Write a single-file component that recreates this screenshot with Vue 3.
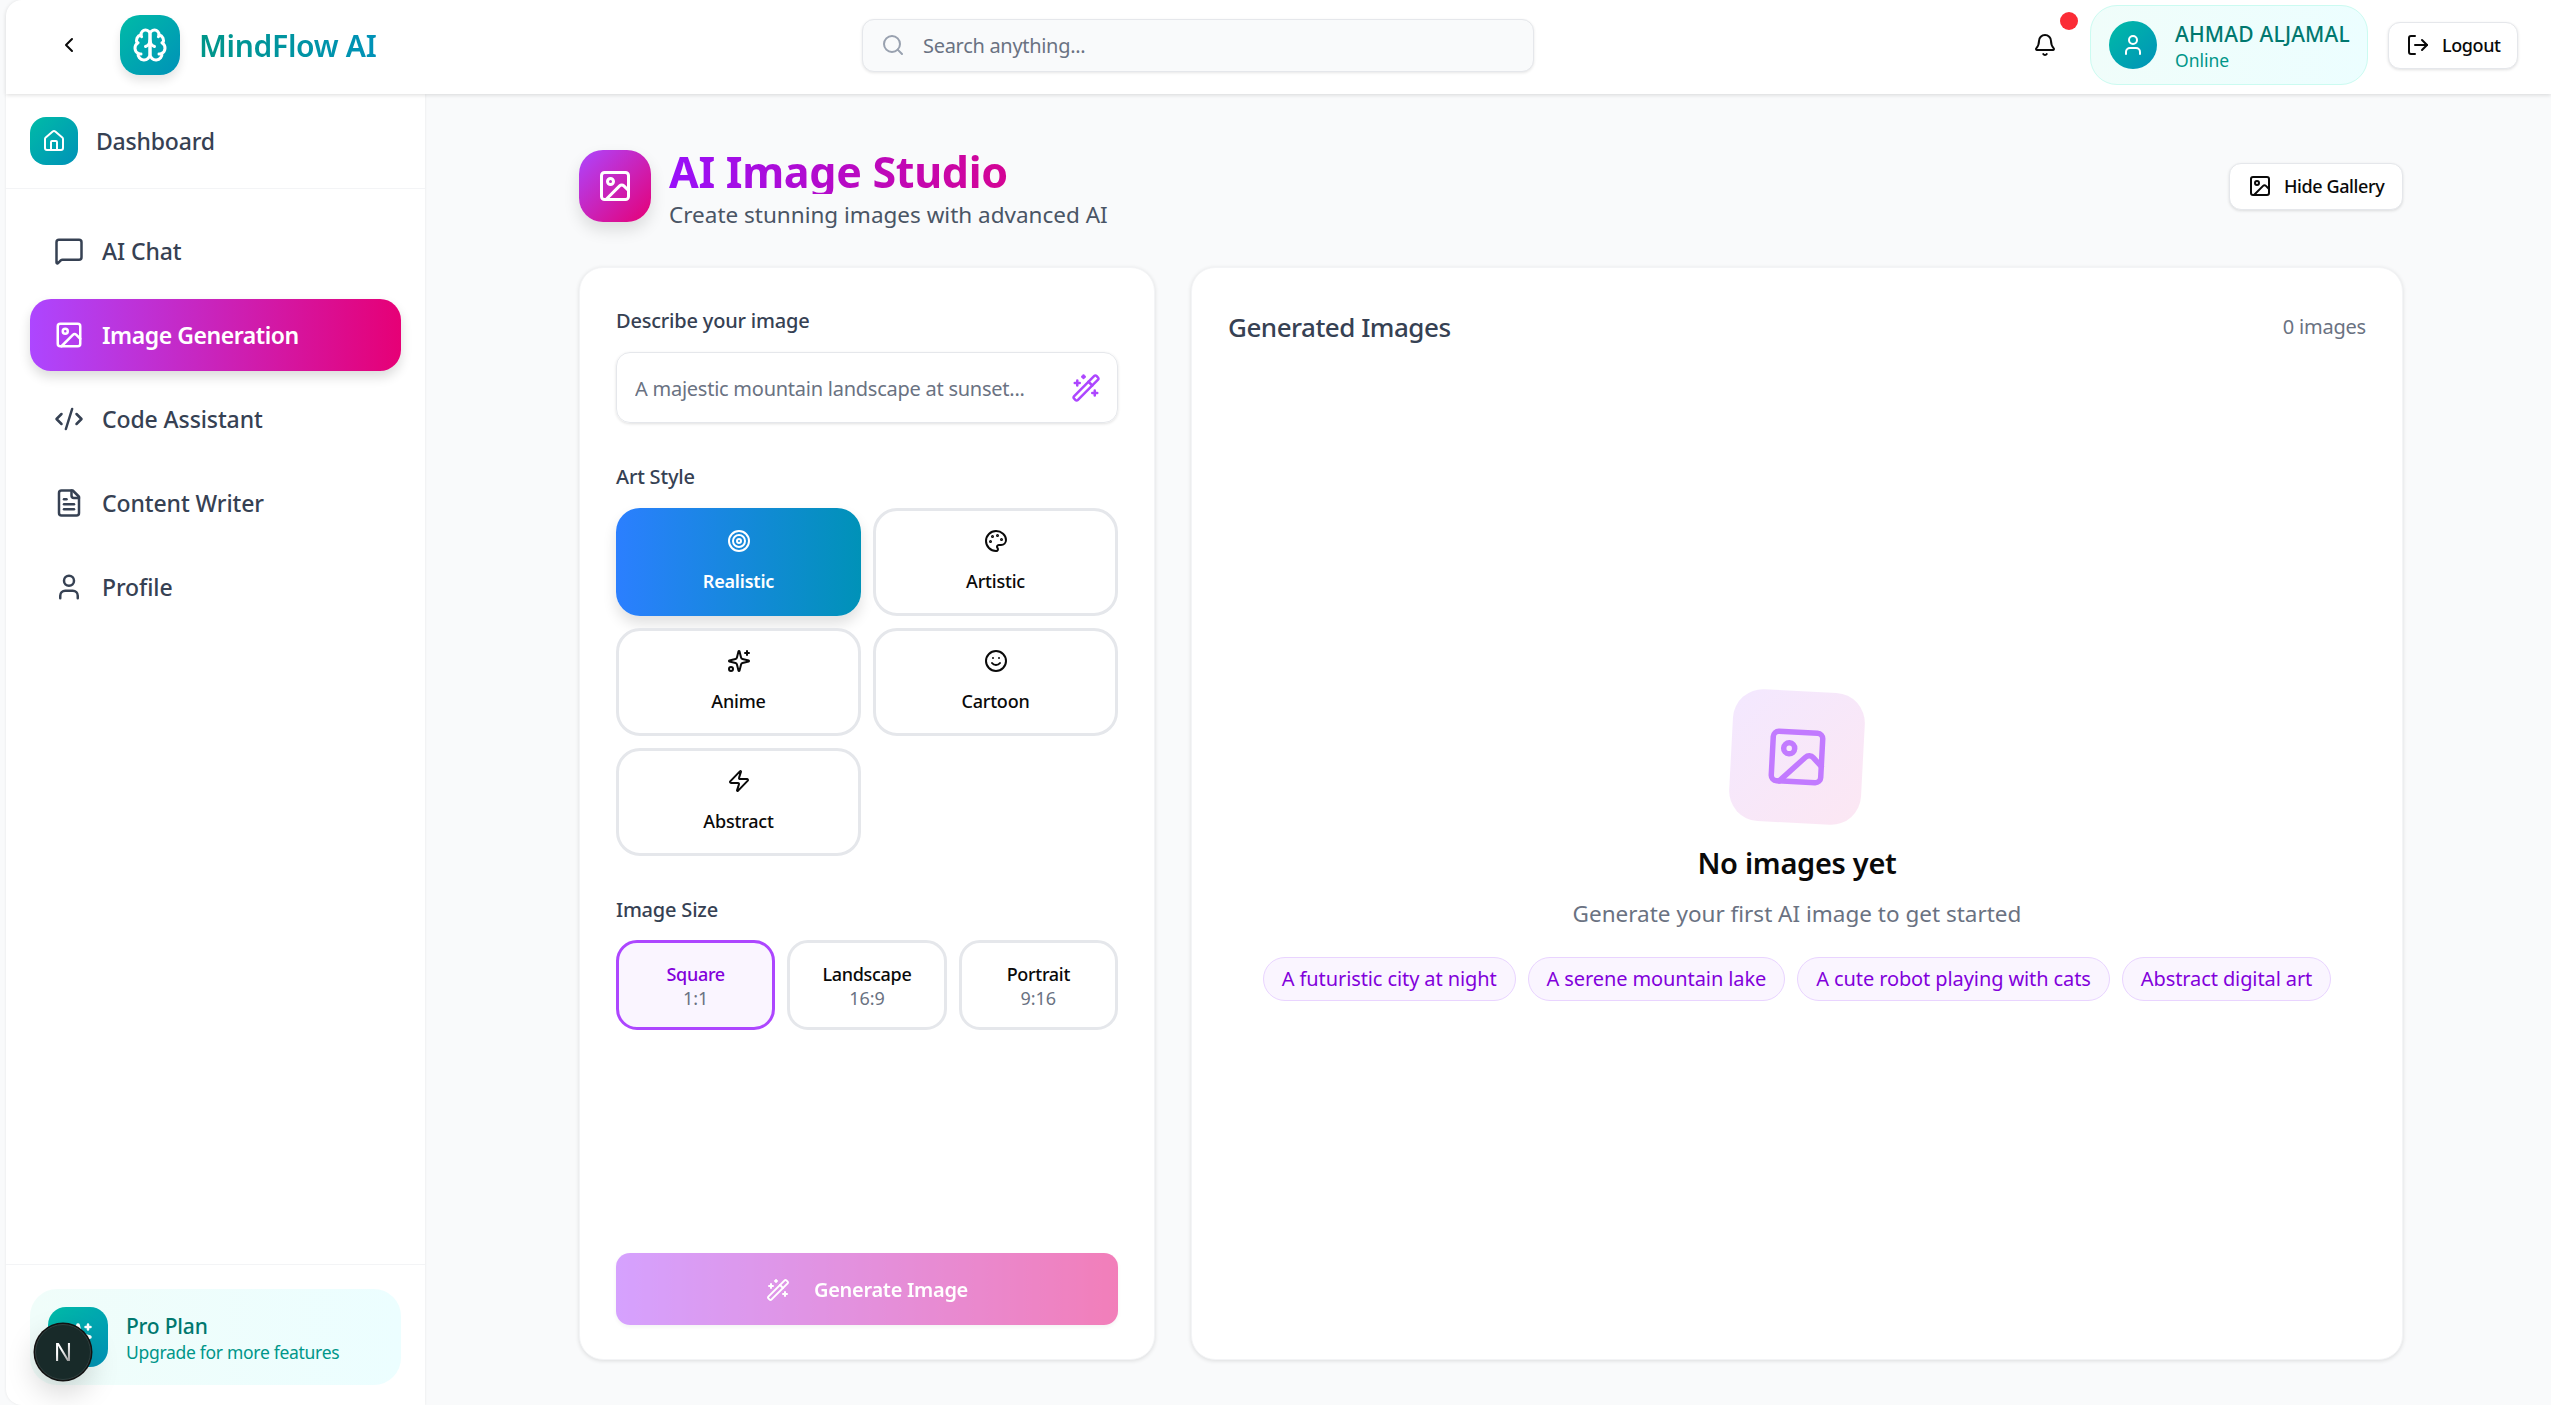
<script setup>
import { ref } from 'vue'

const icons = {
  back: '<path d="m15 18-6-6 6-6"/>',
  brain: '<path d="M12 5a3 3 0 1 0-5.997.125 4 4 0 0 0-2.526 5.77 4 4 0 0 0 .556 6.588A4 4 0 1 0 12 18Z"/><path d="M12 5a3 3 0 1 1 5.997.125 4 4 0 0 1 2.526 5.77 4 4 0 0 1-.556 6.588A4 4 0 1 1 12 18Z"/><path d="M15 13a4.5 4.5 0 0 1-3-4 4.5 4.5 0 0 1-3 4"/><path d="M17.599 6.5a3 3 0 0 0 .399-1.375"/><path d="M6.003 5.125A3 3 0 0 0 6.401 6.5"/><path d="M3.477 10.896a4 4 0 0 1 .585-.396"/><path d="M19.938 10.5a4 4 0 0 1 .585.396"/><path d="M6 18a4 4 0 0 1-1.967-.516"/><path d="M19.967 17.484A4 4 0 0 1 18 18"/>',
  search: '<path d="m21 21-4.34-4.34"/><circle cx="11" cy="11" r="8"/>',
  bell: '<path d="M10.268 21a2 2 0 0 0 3.464 0"/><path d="M3.262 15.326A1 1 0 0 0 4 17h16a1 1 0 0 0 .74-1.673C19.41 13.956 18 12.499 18 8A6 6 0 0 0 6 8c0 4.499-1.411 5.956-2.738 7.326"/>',
  user: '<path d="M19 21v-2a4 4 0 0 0-4-4H9a4 4 0 0 0-4 4v2"/><circle cx="12" cy="7" r="4"/>',
  logout: '<path d="m16 17 5-5-5-5"/><path d="M21 12H9"/><path d="M9 21H5a2 2 0 0 1-2-2V5a2 2 0 0 1 2-2h4"/>',
  home: '<path d="M15 21v-8a1 1 0 0 0-1-1h-4a1 1 0 0 0-1 1v8"/><path d="M3 10a2 2 0 0 1 .709-1.528l7-5.999a2 2 0 0 1 2.582 0l7 5.999A2 2 0 0 1 21 10v9a2 2 0 0 1-2 2H5a2 2 0 0 1-2-2z"/>',
  chat: '<path d="M22 17a2 2 0 0 1-2 2H6.828a2 2 0 0 0-1.414.586l-2.202 2.202A.71.71 0 0 1 2 21.286V5a2 2 0 0 1 2-2h16a2 2 0 0 1 2 2z"/>',
  image: '<rect width="18" height="18" x="3" y="3" rx="2" ry="2"/><circle cx="9" cy="9" r="2"/><path d="m21 15-3.086-3.086a2 2 0 0 0-2.828 0L6 21"/>',
  code: '<path d="m18 16 4-4-4-4"/><path d="m6 8-4 4 4 4"/><path d="m14.5 4-5 16"/>',
  file: '<path d="M15 2H6a2 2 0 0 0-2 2v16a2 2 0 0 0 2 2h12a2 2 0 0 0 2-2V7Z"/><path d="M14 2v4a2 2 0 0 0 2 2h4"/><path d="M10 9H8"/><path d="M16 13H8"/><path d="M16 17H8"/>',
  wand: '<path d="m21.64 3.64-1.28-1.28a1.21 1.21 0 0 0-1.72 0L2.36 18.64a1.21 1.21 0 0 0 0 1.72l1.28 1.28a1.2 1.2 0 0 0 1.72 0L21.64 5.36a1.2 1.2 0 0 0 0-1.72"/><path d="m14 7 3 3"/><path d="M5 6v4"/><path d="M19 14v4"/><path d="M10 2v2"/><path d="M7 8H3"/><path d="M21 16h-4"/><path d="M11 3H9"/>',
  target: '<circle cx="12" cy="12" r="10"/><circle cx="12" cy="12" r="6"/><circle cx="12" cy="12" r="2"/>',
  palette: '<path d="M12 22a1 1 0 0 1 0-20 10 9 0 0 1 10 9 5 5 0 0 1-5 5h-2.25a1.75 1.75 0 0 0-1.4 2.8l.3.4a1.75 1.75 0 0 1-1.4 2.8z"/><circle cx="13.5" cy="6.5" r=".5" fill="currentColor"/><circle cx="17.5" cy="10.5" r=".5" fill="currentColor"/><circle cx="6.5" cy="12.5" r=".5" fill="currentColor"/><circle cx="8.5" cy="7.5" r=".5" fill="currentColor"/>',
  sparkles: '<path d="M9.937 15.5A2 2 0 0 0 8.5 14.063l-6.135-1.582a.5.5 0 0 1 0-.962L8.5 9.936A2 2 0 0 0 9.937 8.5l1.582-6.135a.5.5 0 0 1 .963 0L14.063 8.5A2 2 0 0 0 15.5 9.937l6.135 1.581a.5.5 0 0 1 0 .964L15.5 14.063a2 2 0 0 0-1.437 1.437l-1.582 6.135a.5.5 0 0 1-.963 0z"/><path d="M20 2v4"/><path d="M22 4h-4"/><circle cx="4" cy="20" r="2"/>',
  smile: '<circle cx="12" cy="12" r="10"/><path d="M8 14s1.5 2 4 2 4-2 4-2"/><line x1="9" x2="9.01" y1="9" y2="9"/><line x1="15" x2="15.01" y1="9" y2="9"/>',
  zap: '<path d="M4 14a1 1 0 0 1-.78-1.63l9.9-10.2a.5.5 0 0 1 .86.46l-1.92 6.02A1 1 0 0 0 13 10h7a1 1 0 0 1 .78 1.63l-9.9 10.2a.5.5 0 0 1-.86-.46l1.92-6.02A1 1 0 0 0 11 14z"/>'
}

const navItems = [
  { label: 'AI Chat', icon: 'chat' },
  { label: 'Image Generation', icon: 'image', active: true },
  { label: 'Code Assistant', icon: 'code' },
  { label: 'Content Writer', icon: 'file' },
  { label: 'Profile', icon: 'user' }
]

const styles = [
  { label: 'Realistic', icon: 'target' },
  { label: 'Artistic', icon: 'palette' },
  { label: 'Anime', icon: 'sparkles' },
  { label: 'Cartoon', icon: 'smile' },
  { label: 'Abstract', icon: 'zap' }
]

const sizes = [
  { label: 'Square', ratio: '1:1' },
  { label: 'Landscape', ratio: '16:9' },
  { label: 'Portrait', ratio: '9:16' }
]

const suggestions = [
  'A futuristic city at night',
  'A serene mountain lake',
  'A cute robot playing with cats',
  'Abstract digital art'
]

const prompt = ref('')
const selectedStyle = ref('Realistic')
const selectedSize = ref('Square')
</script>

<template>
  <div class="app">
    <header class="topbar">
      <div class="brand">
        <button class="back-btn">
          <svg class="icon i24" viewBox="0 0 24 24" v-html="icons.back"></svg>
        </button>
        <div class="logo">
          <svg class="icon i36" viewBox="0 0 24 24" v-html="icons.brain"></svg>
        </div>
        <span class="brand-name">MindFlow AI</span>
      </div>

      <div class="search">
        <svg class="icon i24 search-icon" viewBox="0 0 24 24" v-html="icons.search"></svg>
        <input class="search-input" type="text" placeholder="Search anything..." />
      </div>

      <div class="top-actions">
        <button class="bell">
          <svg class="icon i24" viewBox="0 0 24 24" v-html="icons.bell"></svg>
          <span class="bell-dot"></span>
        </button>
        <div class="user-chip">
          <div class="avatar">
            <svg class="icon i24" viewBox="0 0 24 24" v-html="icons.user"></svg>
          </div>
          <div class="user-text">
            <div class="user-name">AHMAD ALJAMAL</div>
            <div class="user-status">Online</div>
          </div>
        </div>
        <button class="ghost-btn logout">
          <svg class="icon i24" viewBox="0 0 24 24" v-html="icons.logout"></svg>
          Logout
        </button>
      </div>
    </header>

    <div class="body">
      <aside class="sidebar">
        <div class="side-head">
          <div class="home-tile">
            <svg class="icon i24" viewBox="0 0 24 24" v-html="icons.home"></svg>
          </div>
          <span>Dashboard</span>
        </div>

        <nav class="nav">
          <a
            v-for="item in navItems"
            :key="item.label"
            class="nav-item"
            :class="{ active: item.active }"
          >
            <svg class="icon i30" viewBox="0 0 24 24" v-html="icons[item.icon]"></svg>
            <span>{{ item.label }}</span>
          </a>
        </nav>

        <div class="side-foot">
          <div class="plan">
            <div class="plan-tile">
              <svg class="icon i30" viewBox="0 0 24 24" v-html="icons.sparkles"></svg>
            </div>
            <div class="plan-text">
              <div class="plan-name">Pro Plan</div>
              <div class="plan-sub">Upgrade for more features</div>
            </div>
          </div>
        </div>
      </aside>

      <main class="main">
        <div class="page-head">
          <div class="page-title">
            <div class="title-tile">
              <svg class="icon i36" viewBox="0 0 24 24" v-html="icons.image"></svg>
            </div>
            <div>
              <h1>AI Image Studio</h1>
              <p>Create stunning images with advanced AI</p>
            </div>
          </div>
          <button class="ghost-btn gallery-btn">
            <svg class="icon i24" viewBox="0 0 24 24" v-html="icons.image"></svg>
            Hide Gallery
          </button>
        </div>

        <div class="columns">
          <section class="card form-card">
            <label class="field-label">Describe your image</label>
            <div class="prompt">
              <input
                v-model="prompt"
                class="prompt-input"
                type="text"
                placeholder="A majestic mountain landscape at sunset..."
              />
              <svg class="icon i30 prompt-wand" viewBox="0 0 24 24" v-html="icons.wand"></svg>
            </div>

            <label class="field-label spaced">Art Style</label>
            <div class="style-grid">
              <button
                v-for="s in styles"
                :key="s.label"
                class="style-btn"
                :class="{ selected: selectedStyle === s.label }"
                @click="selectedStyle = s.label"
              >
                <svg class="icon i24" viewBox="0 0 24 24" v-html="icons[s.icon]"></svg>
                <span>{{ s.label }}</span>
              </button>
            </div>

            <label class="field-label spaced size-label">Image Size</label>
            <div class="size-grid">
              <button
                v-for="s in sizes"
                :key="s.label"
                class="size-btn"
                :class="{ selected: selectedSize === s.label }"
                @click="selectedSize = s.label"
              >
                <span class="size-name">{{ s.label }}</span>
                <span class="size-ratio">{{ s.ratio }}</span>
              </button>
            </div>

            <button class="generate" disabled>
              <svg class="icon i24" viewBox="0 0 24 24" v-html="icons.wand"></svg>
              Generate Image
            </button>
          </section>

          <section class="card gallery-card">
            <div class="gallery-head">
              <h2>Generated Images</h2>
              <span>0 images</span>
            </div>
            <div class="empty">
              <div class="empty-tile">
                <svg class="icon i66" viewBox="0 0 24 24" v-html="icons.image"></svg>
              </div>
              <h3>No images yet</h3>
              <p>Generate your first AI image to get started</p>
              <div class="chips">
                <button v-for="s in suggestions" :key="s" class="chip" @click="prompt = s">{{ s }}</button>
              </div>
            </div>
          </section>
        </div>
      </main>
    </div>

    <div class="dev-badge"><span>N</span></div>
  </div>
</template>

<style>
html, body {
  margin: 0;
  background: #f9fafb;
}
</style>

<style scoped>
* {
  box-sizing: border-box;
}

.app {
  height: 100vh;
  min-height: 1405px;
  padding-left: 6px;
  display: flex;
  flex-direction: column;
  position: relative;
  overflow: hidden;
  font-family: "Noto Sans", "Open Sans", sans-serif;
  color: #0a0a0a;
  background: #f9fafb;
}

button {
  font-family: inherit;
  cursor: pointer;
}

.icon {
  fill: none;
  stroke: currentColor;
  stroke-width: 2;
  stroke-linecap: round;
  stroke-linejoin: round;
  flex-shrink: 0;
  display: block;
}

.i24 { width: 24px; height: 24px; }
.i30 { width: 30px; height: 30px; }
.i36 { width: 36px; height: 36px; }
.i66 { width: 66px; height: 66px; }

/* top bar */
.topbar {
  height: 94px;
  flex-shrink: 0;
  padding-bottom: 4px;
  display: grid;
  grid-template-columns: 856px 672px 1fr;
  align-items: center;
  background: #fff;
  border-top-left-radius: 16px;
  box-shadow: 0 1px 4px rgba(0, 0, 0, 0.14);
  position: relative;
  z-index: 2;
}

.brand {
  display: flex;
  align-items: center;
  padding-left: 39px;
}

.back-btn {
  width: 48px;
  height: 48px;
  border: none;
  background: none;
  display: flex;
  align-items: center;
  justify-content: center;
  padding: 0;
  color: #0a0a0a;
}

.logo {
  width: 60px;
  height: 60px;
  margin-left: 27px;
  border-radius: 20px;
  display: flex;
  align-items: center;
  justify-content: center;
  color: #fff;
  background: linear-gradient(135deg, #00bba7, #0092b8);
  box-shadow: 0 6px 10px rgba(0, 0, 0, 0.1);
}

.brand-name {
  margin-left: 19px;
  font-size: 30px;
  font-weight: 600;
  letter-spacing: -0.3px;
  background: linear-gradient(90deg, #009689, #0092b8);
  -webkit-background-clip: text;
  background-clip: text;
  color: transparent;
}

.search {
  height: 53px;
  display: flex;
  align-items: center;
  gap: 16px;
  padding: 0 18px;
  background: #f9fafb;
  border: 1.5px solid #e5e7eb;
  border-radius: 12px;
  box-shadow: 0 1px 3px rgba(0, 0, 0, 0.1);
}

.search-icon {
  color: #99a1af;
}

.search-input {
  flex: 1;
  border: none;
  outline: none;
  background: transparent;
  font-family: inherit;
  font-size: 20px;
  letter-spacing: -0.3px;
}

.search-input::placeholder {
  color: #6a7282;
  opacity: 1;
}

.top-actions {
  display: flex;
  align-items: center;
  justify-content: flex-end;
  padding-right: 33px;
}

.bell {
  width: 48px;
  height: 48px;
  border: none;
  background: none;
  padding: 0;
  display: flex;
  align-items: center;
  justify-content: center;
  position: relative;
  margin-right: 21px;
  color: #0a0a0a;
}

.bell-dot {
  position: absolute;
  right: -9px;
  top: -9px;
  width: 18px;
  height: 18px;
  border-radius: 50%;
  background: #fb2c36;
}

.user-chip {
  height: 80px;
  width: 278px;
  display: flex;
  align-items: center;
  gap: 18px;
  padding: 0 0 0 18px;
  border: 1.5px solid #cbfbf1;
  border-radius: 27px;
  background: linear-gradient(90deg, #f0fdfa, #ecfeff);
}

.avatar {
  width: 48px;
  height: 48px;
  flex-shrink: 0;
  border-radius: 50%;
  display: flex;
  align-items: center;
  justify-content: center;
  color: #fff;
  background: linear-gradient(135deg, #00bba7, #0092b8);
}

.user-text {
  padding-top: 2px;
  white-space: nowrap;
}

.user-name {
  font-size: 21px;
  font-weight: 500;
  line-height: 28px;
  color: #00786f;
  letter-spacing: 0.2px;
}

.user-status {
  font-size: 17.5px;
  line-height: 24px;
  color: #009689;
}

.ghost-btn {
  display: flex;
  align-items: center;
  border: 1.5px solid #e5e7eb;
  border-radius: 12px;
  background: #fff;
  box-shadow: 0 1px 3px rgba(0, 0, 0, 0.12);
  font-size: 18px;
  font-weight: 500;
  color: #0a0a0a;
  letter-spacing: -0.4px;
}

.logout {
  width: 130px;
  height: 47px;
  margin-left: 20px;
  padding: 0 0 0 17px;
  gap: 12px;
}

/* sidebar */
.body {
  flex: 1;
  display: flex;
  min-height: 0;
}

.sidebar {
  width: 419px;
  flex-shrink: 0;
  display: flex;
  flex-direction: column;
  background: #fff;
  border-bottom-left-radius: 16px;
  box-shadow: 0 0 3px rgba(0, 0, 0, 0.08);
}

.side-head {
  height: 95px;
  flex-shrink: 0;
  display: flex;
  align-items: center;
  gap: 18px;
  padding-left: 24px;
  border-bottom: 1.5px solid #f3f4f6;
  font-size: 23px;
  font-weight: 500;
  color: #364153;
  letter-spacing: -0.2px;
}

.home-tile {
  width: 48px;
  height: 48px;
  border-radius: 16px;
  display: flex;
  align-items: center;
  justify-content: center;
  color: #fff;
  background: linear-gradient(135deg, #00bba7, #0092b8);
}

.nav {
  flex: 1;
  padding: 26px 24px 0;
  display: flex;
  flex-direction: column;
  gap: 12px;
}

.nav-item {
  height: 72px;
  display: flex;
  align-items: center;
  gap: 18px;
  padding-left: 24px;
  border-radius: 21px;
  font-size: 23px;
  font-weight: 500;
  color: #364153;
  letter-spacing: -0.1px;
}

.nav-item.active {
  color: #fff;
  font-weight: 600;
  letter-spacing: -0.45px;
  background: linear-gradient(90deg, #ad46ff, #e60076);
  box-shadow: 0 6px 12px rgba(0, 0, 0, 0.14);
}

.side-foot {
  height: 141px;
  flex-shrink: 0;
  padding: 24px 24px 0;
  border-top: 1.5px solid #f3f4f6;
}

.plan {
  height: 96px;
  display: flex;
  align-items: center;
  gap: 18px;
  padding-left: 18px;
  border-radius: 27px;
  background: linear-gradient(90deg, #f0fdfa, #ecfeff);
}

.plan-tile {
  width: 60px;
  height: 60px;
  border-radius: 18px;
  display: flex;
  align-items: center;
  justify-content: center;
  color: #fff;
  background: linear-gradient(135deg, #00bba7, #0092b8);
}

.plan-text {
  padding-top: 3px;
}

.plan-name {
  font-size: 21px;
  line-height: 28px;
  font-weight: 500;
  color: #00786f;
  letter-spacing: -0.2px;
}

.plan-sub {
  font-size: 17.5px;
  line-height: 25px;
  color: #009689;
  letter-spacing: -0.3px;
}

/* main */
.main {
  flex: 1;
  min-width: 0;
  padding: 56px 148px 45px 154px;
  display: flex;
  flex-direction: column;
}

.page-head {
  height: 72px;
  flex-shrink: 0;
  display: flex;
  align-items: center;
  justify-content: space-between;
  margin-bottom: 45px;
}

.page-title {
  height: 72px;
  display: flex;
  align-items: flex-start;
  gap: 18px;
}

.title-tile {
  width: 72px;
  height: 72px;
  border-radius: 24px;
  display: flex;
  align-items: center;
  justify-content: center;
  color: #fff;
  background: linear-gradient(135deg, #ad46ff, #e60076);
  box-shadow: 0 8px 16px rgba(0, 0, 0, 0.12);
}

.page-title h1 {
  margin: 0 0 6px;
  font-size: 43px;
  line-height: 44px;
  font-weight: 700;
  letter-spacing: -0.3px;
  background: linear-gradient(90deg, #9810fa, #e60076);
  -webkit-background-clip: text;
  background-clip: text;
  color: transparent;
}

.page-title p {
  margin: 0;
  font-size: 22.5px;
  line-height: 30px;
  color: #4a5565;
}

.gallery-btn {
  width: 174px;
  height: 47px;
  padding-left: 18px;
  gap: 12px;
}

.columns {
  flex: 1;
  min-height: 0;
  display: grid;
  grid-template-columns: 576px 1fr;
  gap: 36px;
}

.card {
  background: #fff;
  border: 1.5px solid #f3f4f6;
  border-radius: 24px;
  box-shadow: 0 1px 4px rgba(0, 0, 0, 0.12);
  padding: 34.5px 36px;
  display: flex;
  flex-direction: column;
}

.field-label {
  display: block;
  height: 36px;
  line-height: 36px;
  margin-bottom: 13px;
  font-size: 20px;
  font-weight: 500;
  color: #364153;
  letter-spacing: -0.2px;
}

.field-label.spaced {
  margin-top: 36px;
}

.field-label.size-label {
  margin-bottom: 12px;
}

.prompt {
  height: 71px;
  flex-shrink: 0;
  display: flex;
  align-items: center;
  padding: 2px 16px 0 16px;
  border: 1.5px solid #e5e7eb;
  border-radius: 14px;
  box-shadow: 0 1px 3px rgba(0, 0, 0, 0.12);
}

.prompt-input {
  flex: 1;
  min-width: 0;
  border: none;
  outline: none;
  font-family: inherit;
  font-size: 20px;
  letter-spacing: -0.25px;
}

.prompt-input::placeholder {
  color: #6a7282;
  opacity: 1;
}

.prompt-wand {
  color: #ad46ff;
}

.style-grid {
  display: grid;
  grid-template-columns: repeat(2, 1fr);
  grid-auto-rows: 108px;
  gap: 12px;
}

.style-btn {
  border: 3px solid #e5e7eb;
  border-radius: 24px;
  background: #fff;
  display: flex;
  flex-direction: column;
  align-items: center;
  padding: 18px 0 0;
  gap: 15px;
  font-size: 18px;
  font-weight: 500;
  line-height: 27px;
  color: #0a0a0a;
  letter-spacing: -0.2px;
}

.style-btn.selected {
  color: #fff;
  font-weight: 600;
  border-color: transparent;
  background: linear-gradient(90deg, #2b7fff, #0092b8) border-box;
  box-shadow: 0 8px 14px rgba(0, 0, 0, 0.12);
}

.size-grid {
  display: grid;
  grid-template-columns: repeat(3, 1fr);
  gap: 12px;
}

.size-btn {
  height: 90px;
  border: 3px solid #e5e7eb;
  border-radius: 21px;
  background: #fff;
  display: flex;
  flex-direction: column;
  align-items: center;
  justify-content: center;
  padding: 2px 0 0;
}

.size-btn.selected {
  border-color: #ad46ff;
  background: #faf5ff;
}

.size-name {
  font-size: 18px;
  line-height: 24px;
  font-weight: 500;
  color: #0a0a0a;
  letter-spacing: -0.3px;
}

.size-btn.selected .size-name {
  color: #8200db;
}

.size-ratio {
  font-size: 18px;
  line-height: 24px;
  color: #6a7282;
}

.generate {
  margin-top: auto;
  height: 72px;
  flex-shrink: 0;
  border: none;
  border-radius: 14px;
  padding: 2px 0 0;
  display: flex;
  align-items: center;
  justify-content: center;
  gap: 24px;
  color: #fff;
  font-size: 20px;
  font-weight: 600;
  letter-spacing: -0.3px;
  background: linear-gradient(90deg, #ad46ff, #e60076);
  opacity: 0.5;
  box-shadow: 0 2px 4px rgba(0, 0, 0, 0.1);
}

.gallery-head {
  display: flex;
  align-items: center;
  justify-content: space-between;
  height: 48px;
}

.gallery-head h2 {
  margin: 0;
  font-size: 26px;
  font-weight: 500;
  color: #364153;
  letter-spacing: -0.5px;
}

.gallery-head span {
  font-size: 20px;
  color: #6a7282;
  letter-spacing: -0.2px;
}

.empty {
  display: flex;
  flex-direction: column;
  align-items: center;
  padding-top: 340px;
}

.empty-tile {
  width: 132px;
  height: 132px;
  border-radius: 30px;
  display: flex;
  align-items: center;
  justify-content: center;
  color: #c27aff;
  background: linear-gradient(135deg, #f3e8ff, #fce7f3);
  transform: rotate(3deg);
}

.empty h3 {
  margin: 20px 0 0;
  font-size: 29px;
  line-height: 40px;
  font-weight: 600;
  color: #0a0a0a;
  letter-spacing: -0.3px;
}

.empty p {
  margin: 15px 0 0;
  font-size: 22.5px;
  line-height: 32px;
  color: #6a7282;
}

.chips {
  display: flex;
  gap: 12px;
  margin-top: 27px;
}

.chip {
  height: 44px;
  padding: 0 18px;
  border: 1.5px solid #e9d4ff;
  border-radius: 22px;
  background: #faf5ff;
  color: #8200db;
  font-size: 20px;
  letter-spacing: -0.1px;
  white-space: nowrap;
}

/* framework dev indicator */
.dev-badge {
  position: absolute;
  left: 35px;
  bottom: 25px;
  width: 56px;
  height: 56px;
  border-radius: 50%;
  background: #182a29;
  border: 1.5px solid #30403f;
  box-shadow: 0 0 0 1.5px #111, 0 12px 30px rgba(0, 0, 0, 0.18);
  display: flex;
  align-items: center;
  justify-content: center;
  z-index: 3;
}

.dev-badge span {
  font-family: "Liberation Sans", sans-serif;
  font-size: 25px;
  line-height: 1;
  background: linear-gradient(135deg, #fff 40%, #777);
  -webkit-background-clip: text;
  background-clip: text;
  color: transparent;
}
</style>
